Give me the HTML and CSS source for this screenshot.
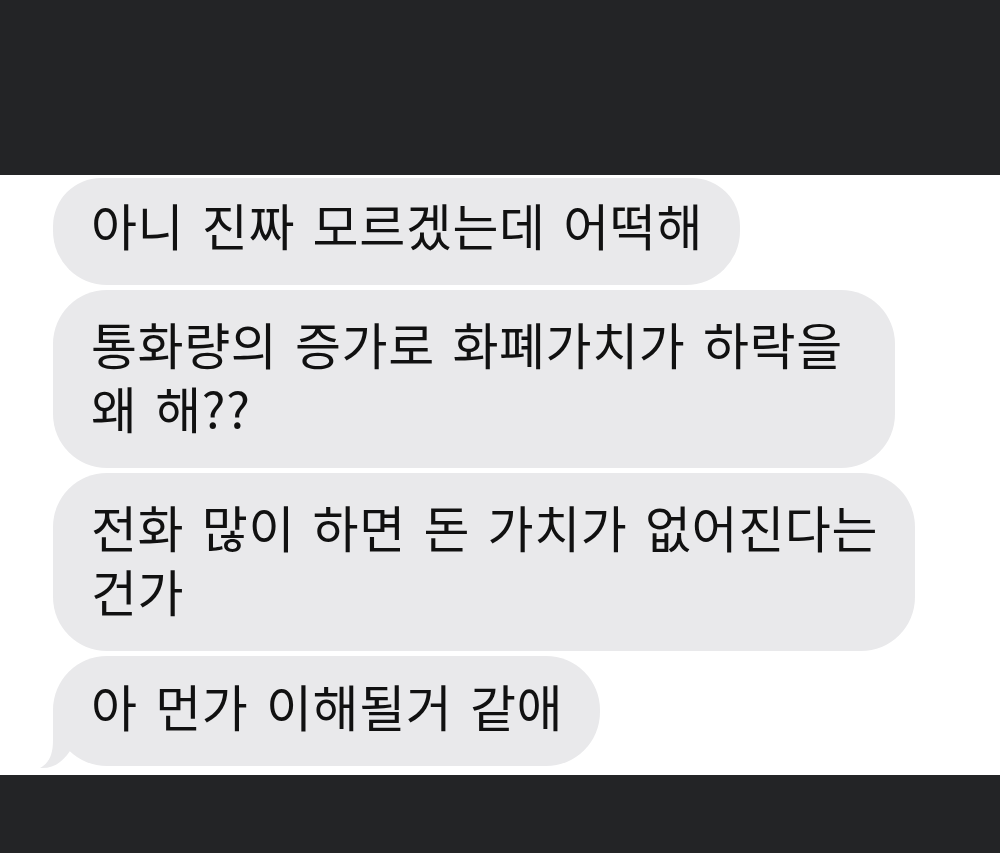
FILE: index.html
```html
<!DOCTYPE html>
<html lang="ko">
<head>
    <meta charset="UTF-8">
    <meta name="viewport" content="width=device-width, initial-scale=1.0">
    <title>메시지</title>
    <link rel="stylesheet" href="styles.css">
</head>
<body>
    <div class="bar bar-top"></div>

    <div class="thread">
        <div class="bubble bubble-cut">아니 진짜 모르겠는데 어떡해</div>
        <div class="bubble bubble-wide">통화량의 증가로 화폐가치가 하락을<br>왜 해??</div>
        <div class="bubble">전화 많이 하면 돈 가치가 없어진다는<br>건가</div>
        <div class="bubble bubble-last">
            아 먼가 이해될거 같애
            <svg class="tail" width="40" height="60" viewBox="0 0 40 60">
                <path d="M14 0 L14 30 C14 45 10 53 1 58 C13 59 23 53 31 41 L40 44 L40 0 Z" />
            </svg>
        </div>
    </div>

    <div class="bar bar-bottom"></div>
</body>
</html>
```

FILE: styles.css
```css
body {
    margin: 0;
    background: #fff;
    font-family: "Noto Sans CJK KR", "Noto Sans", sans-serif;
    overflow: hidden;
}
.bar {
    background: #232426;
}
.bar-top {
    height: 175px;
}
.bar-bottom {
    height: 78px;
}
.thread {
    display: flex;
    flex-direction: column;
    align-items: flex-start;
    gap: 5px;
    padding: 3px 0 9px 53px;
}
.bubble {
    position: relative;
    background: #e9e9eb;
    color: #111;
    font-size: 50px;
    letter-spacing: 0.6px;
    word-spacing: 3px;
    line-height: 64px;
    padding: 21px 37px 29px 38px;
    border-radius: 54px;
}
.bubble-cut {
    padding-top: 14px;
    border-top-left-radius: 48px;
    border-top-right-radius: 48px;
}
.bubble-wide {
    padding-right: 52px;
}
.bubble-last {
    padding-top: 17px;
}
.tail {
    position: absolute;
    left: -14px;
    bottom: -4px;
    fill: #e9e9eb;
}
```
